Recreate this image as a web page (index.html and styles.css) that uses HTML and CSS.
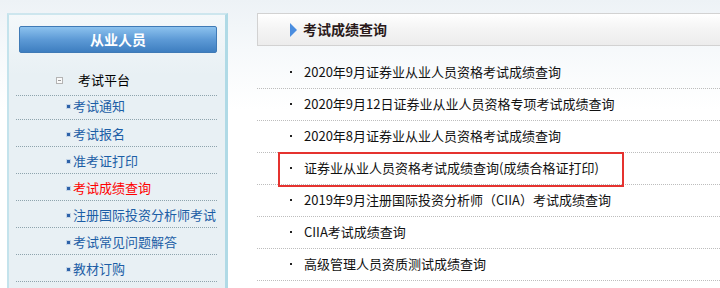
FILE: index.html
```html
<!DOCTYPE html>
<html lang="zh-CN">
<head>
    <meta charset="UTF-8">
    <title>考试成绩查询</title>
    <link rel="stylesheet" href="styles.css">
</head>
<body>
    <div class="page">
        <div class="sidebar">
            <div class="side-title">从业人员</div>
            <ul class="side-menu">
                <li class="group"><span class="fold"></span>考试平台</li>
                <li class="first"><a href="#">考试通知</a></li>
                <li><a href="#">考试报名</a></li>
                <li><a href="#">准考证打印</a></li>
                <li class="current"><a href="#">考试成绩查询</a></li>
                <li><a href="#">注册国际投资分析师考试</a></li>
                <li><a href="#">考试常见问题解答</a></li>
                <li><a href="#">教材订购</a></li>
            </ul>
        </div>
        <div class="main">
            <div class="main-head"><span class="arrow"></span>考试成绩查询</div>
            <ul class="news">
                <li><a href="#">2020年9月证券业从业人员资格考试成绩查询</a></li>
                <li><a href="#">2020年9月12日证券业从业人员资格专项考试成绩查询</a></li>
                <li><a href="#">2020年8月证券业从业人员资格考试成绩查询</a></li>
                <li class="marked"><a href="#">证券业从业人员资格考试成绩查询(成绩合格证打印)</a></li>
                <li><a href="#">2019年9月注册国际投资分析师（CIIA）考试成绩查询</a></li>
                <li><a href="#">CIIA考试成绩查询</a></li>
                <li><a href="#">高级管理人员资质测试成绩查询</a></li>
            </ul>
        </div>
    </div>
</body>
</html>
```

FILE: styles.css
```css
* { box-sizing: border-box; margin: 0; padding: 0; }
body {
    font-family: "Noto Sans CJK SC", "DejaVu Sans", sans-serif;
    font-size: 13px;
    background: linear-gradient(to bottom, #edf2f6 0, #f6f9fb 50px, #fff 110px);
    height: 288px; overflow: hidden;
}
a { text-decoration: none; }
ul { list-style: none; }
.page { display: flex; padding-top: 13px; height: 288px; }

/* left column */
.sidebar {
    margin-left: 7px; width: 221px; height: 275px; overflow: hidden;
    border-left: 2px solid #c4e3ec; border-top: 2px solid #cde6ee;
    border-right: 3px solid #b0dae6;
    background: linear-gradient(to bottom, #f4f8fa 0, #e8f0f4 60px);
    padding: 11px 0 0 7px;
}
.side-title {
    margin-left: 3px; width: 198px; height: 27px;
    border: 1px solid #3f7ab6; border-radius: 2px;
    background: linear-gradient(to bottom, #8cc2ee, #5d9ad6 50%, #3e7ec0);
    color: #fff; font-weight: bold; font-size: 14px;
    line-height: 25px; text-align: center;
}
.side-menu { width: 201px; }
.side-menu li {
    height: 27px; padding-top: 4px; line-height: 20px;
    border-bottom: 1px dotted #8ea4ad;
    padding-left: 51px;
}
.side-menu li a { color: #1c5ea6; }
.side-menu li a::before {
    content: ""; display: inline-block; width: 3px; height: 3px;
    background: #2d62a8; box-shadow: 0 0 0 1px #c4d5e8;
    margin-right: 3px; vertical-align: middle; position: relative; top: -1px;
}
.side-menu li.current a { color: #f00; }
.side-menu li.first { height: 24px; padding-top: 0; }
.side-menu li.group {
    height: 43px; padding-top: 17px; padding-left: 40px; color: #000;
}
.fold {
    display: inline-block; width: 7px; height: 7px;
    border: 1px solid #b4b4b4; background: #fafafa;
    margin-right: 15px; vertical-align: middle; position: relative; top: -1px;
}
.fold::after {
    content: ""; position: absolute; left: 1px; top: 2px;
    width: 3px; height: 1px; background: #999;
}

/* right column */
.main { flex: 1; padding-left: 29px; }
.main-head {
    height: 33px; border: 1px solid #d2d2d2; border-right: none;
    background: linear-gradient(to bottom, #fff, #f4f4f4 50%, #ececec);
    padding-left: 32px; line-height: 31px;
    font-size: 14px; font-weight: bold; color: #2a1a1a;
}
.arrow {
    display: inline-block; width: 0; height: 0;
    border-top: 7px solid transparent; border-bottom: 7px solid transparent;
    border-left: 7px solid #4a8ddf;
    margin-right: 6px; vertical-align: middle; position: relative; top: -1px;
}
.news li {
    position: relative;
    height: 32px; padding: 5px 0 0 33px; line-height: 20px;
    border-bottom: 1px dotted #bdbdbd;
}
.news li:first-child { height: 43px; padding-top: 16px; }
.news li a { color: #111; }
.news li a::before {
    content: ""; display: inline-block; width: 2px; height: 2px;
    background: #222; margin-right: 12px;
    vertical-align: middle; position: relative; top: -1px;
}
.news li.marked::after {
    content: ""; position: absolute; left: 21px; top: -1px;
    width: 342px; height: 31px; border: 2px solid #e5322f;
}
```
